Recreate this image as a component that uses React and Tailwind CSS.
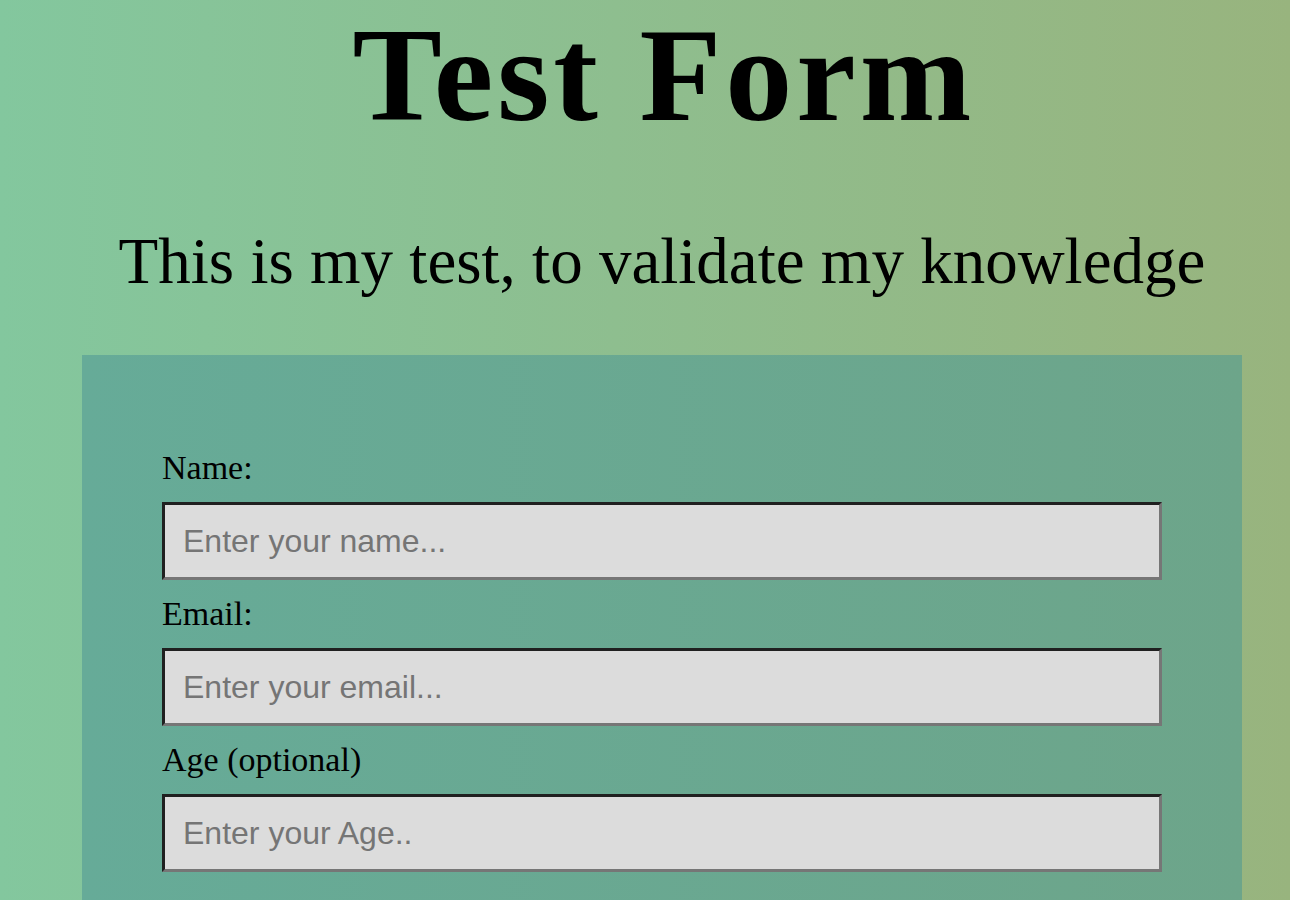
export default function App() {
  const fields = [
    { label: "Name:", ph: "Enter your name...", type: "text" },
    { label: "Email:", ph: "Enter your email...", type: "email" },
    { label: "Age (optional)", ph: "Enter your Age..", type: "number" },
  ];
  return (
    <div
      className="min-h-screen w-full bg-gradient-to-r from-[#83c79e] to-[#98b47e]"
      style={{ fontFamily: '"Liberation Serif", Georgia, serif' }}
    >
      <div className="ml-[82px] w-[1160px] pt-[8px]">
        <h1 className="pl-[4px] text-center text-[134px] font-bold leading-[134px] tracking-[4px] text-black">
          Test Form
        </h1>
        <p className="mt-[87px] text-center text-[65px] leading-[65px] text-black">
          This is my test, to validate my knowledge
        </p>
        <div className="mt-[61px] bg-gradient-to-r from-[#66ab98] to-[#6da58a] px-[80px] pt-[96px] pb-[40px]">
          {fields.map((f, i) => (
            <div key={i} className="flex flex-col">
              <label className="text-[34px] leading-[34px] text-black">{f.label}</label>
              <input
                type={f.type}
                placeholder={f.ph}
                className="mt-[17px] mb-[17px] h-[78px] w-[1000px] border-[3px] border-t-[#202020] border-l-[#202020] border-r-[#767676] border-b-[#767676] bg-[#dcdcdc] px-[18px] text-[32px] text-black placeholder:text-[#757575] outline-none"
                style={{ fontFamily: '"Liberation Sans", Arial, sans-serif' }}
              />
            </div>
          ))}
        </div>
      </div>
    </div>
  );
}
